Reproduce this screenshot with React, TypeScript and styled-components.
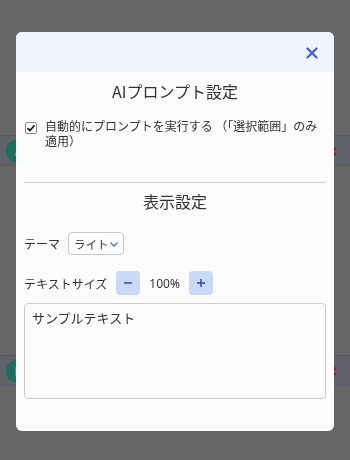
import React, { useState } from "react";
import styled, { createGlobalStyle } from "styled-components";

const GlobalStyle = createGlobalStyle`
  html, body { margin: 0; padding: 0; }
  body {
    background: #cccccc;
    font-family: "Noto Sans CJK JP", "Noto Sans", sans-serif;
    color: #333;
    width: 350px;
    height: 460px;
    overflow: hidden;
  }
  * { box-sizing: border-box; }
`;

const Page = styled.div`
  display: flex;
  flex-direction: column;
  padding-top: 135px;
`;

const Row = styled.div<{ $gap?: number }>`
  height: 31px;
  margin-top: ${(p) => p.$gap ?? 0}px;
  display: flex;
  align-items: center;
  justify-content: space-between;
  padding: 0 12px 0 6px;
  background: #c0c6d4;
  border-top: 1px solid #b0b0b0;
  border-bottom: 1px solid #b8b8b8;
`;

const Avatar = styled.div`
  width: 24px;
  height: 24px;
  border-radius: 50%;
  background: #3cdcc0;
  color: #fff;
  font-size: 11px;
  font-weight: 700;
  display: flex;
  align-items: center;
  justify-content: center;
`;

const RemoveMark = styled.span`
  color: #ff3868;
  font-size: 13px;
  font-weight: 700;
`;

const Overlay = styled.div`
  position: fixed;
  inset: 0;
  background: rgba(0, 0, 0, 0.5);
  display: flex;
  align-items: flex-start;
  justify-content: center;
  padding-top: 32px;
`;

const Modal = styled.div`
  width: 318px;
  background: #fcfcfc;
  border-radius: 6px;
  overflow: hidden;
  display: flex;
  flex-direction: column;
`;

const Header = styled.div`
  height: 40px;
  background: #f0f4fe;
  display: flex;
  align-items: center;
  justify-content: flex-end;
  padding: 0 14px 0 0;
`;

const CloseButton = styled.button`
  border: none;
  background: transparent;
  padding: 0;
  width: 16px;
  height: 16px;
  display: flex;
  align-items: center;
  justify-content: center;
  margin-top: 2px;
  cursor: pointer;
`;

const Body = styled.div`
  display: flex;
  flex-direction: column;
  padding: 7px 8px 32px;
`;

const SectionTitle = styled.h2`
  margin: 0;
  font-size: 16px;
  font-weight: 400;
  line-height: 24px;
  text-align: center;
  color: #333;
`;

const CheckRow = styled.label`
  display: flex;
  align-items: flex-start;
  gap: 8px;
  margin-top: 15px;
  padding-left: 1px;
  font-size: 12px;
  line-height: 15px;
  color: #333;
  cursor: pointer;
`;

const HiddenInput = styled.input`
  position: absolute;
  opacity: 0;
  width: 0;
  height: 0;
`;

const CheckBox = styled.span`
  margin-top: 4px;
  width: 12px;
  height: 12px;
  flex-shrink: 0;
  border: 1px solid #8a8a8a;
  border-radius: 2px;
  background: #fff;
  display: flex;
  align-items: center;
  justify-content: center;
`;

const Divider = styled.hr`
  border: none;
  border-top: 1px solid #cfcfcf;
  margin: 34px 0 6px;
  width: 100%;
`;

const FieldRow = styled.div<{ $mt: number }>`
  display: flex;
  align-items: center;
  gap: 9px;
  margin-top: ${(p) => p.$mt}px;
  font-size: 12px;
  color: #333;
`;

const ThemeRow = styled(FieldRow)`
  gap: 8px;
`;

const SelectBox = styled.div`
  width: 56px;
  height: 23px;
  border: 1px solid #c8c8c8;
  border-radius: 4px;
  background: #fff;
  display: flex;
  align-items: center;
  justify-content: space-between;
  padding: 0 4px 0 5px;
  font-size: 11.5px;
`;

const StepButton = styled.button`
  width: 24px;
  height: 24px;
  border: none;
  border-radius: 4px;
  background: #c9daf6;
  color: #2b4fa8;
  display: flex;
  align-items: center;
  justify-content: center;
  padding: 0;
  cursor: pointer;
`;

const Percent = styled.span`
  font-family: "Noto Sans", sans-serif;
  font-size: 12px;
  color: #333;
`;

const Preview = styled.div<{ $size: number }>`
  margin-top: 8px;
  height: 96px;
  border: 1px solid #cccccc;
  border-radius: 4px;
  padding: 5px 7px;
  font-size: ${(p) => p.$size}px;
  color: #333;
  line-height: 18px;
`;

export default function App() {
  const [checked, setChecked] = useState(true);
  const [size, setSize] = useState(100);
  return (
    <>
      <GlobalStyle />
      <Page>
        <Row>
          <Avatar>A</Avatar>
          <RemoveMark>✕</RemoveMark>
        </Row>
        <Row $gap={189}>
          <Avatar>D</Avatar>
          <RemoveMark>✕</RemoveMark>
        </Row>
      </Page>
      <Overlay>
        <Modal>
          <Header>
            <CloseButton aria-label="close">
              <svg width="12" height="12" viewBox="0 0 12 12">
                <path d="M1.5 1.5 L10.5 10.5 M10.5 1.5 L1.5 10.5" stroke="#3f5fd6" strokeWidth="2.2" strokeLinecap="round" />
              </svg>
            </CloseButton>
          </Header>
          <Body>
            <SectionTitle>AIプロンプト設定</SectionTitle>
            <CheckRow>
              <HiddenInput type="checkbox" checked={checked} onChange={() => setChecked(!checked)} />
              <CheckBox>
                {checked && (
                  <svg width="10" height="10" viewBox="0 0 10 10">
                    <path d="M1.5 5.2 L4 7.6 L8.6 2.2" fill="none" stroke="#111" strokeWidth="1.7" />
                  </svg>
                )}
              </CheckBox>
              <span>自動的にプロンプトを実行する （「選択範囲」のみ適用）</span>
            </CheckRow>
            <Divider />
            <SectionTitle>表示設定</SectionTitle>
            <ThemeRow $mt={19}>
              <span>テーマ</span>
              <SelectBox>
                <span>ライト</span>
                <svg width="10" height="10" viewBox="0 0 10 10">
                  <path d="M1.5 3.5 L5 7 L8.5 3.5" fill="none" stroke="#3b6fd8" strokeWidth="1.3" />
                </svg>
              </SelectBox>
            </ThemeRow>
            <FieldRow $mt={16}>
              <span>テキストサイズ</span>
              <StepButton onClick={() => setSize(size - 10)} aria-label="decrease">
                <svg width="10" height="10" viewBox="0 0 10 10">
                  <path d="M1 5 H9" stroke="#2b4fa8" strokeWidth="1.5" />
                </svg>
              </StepButton>
              <Percent>{size}%</Percent>
              <StepButton onClick={() => setSize(size + 10)} aria-label="increase">
                <svg width="10" height="10" viewBox="0 0 10 10">
                  <path d="M1 5 H9 M5 1 V9" stroke="#2b4fa8" strokeWidth="1.5" />
                </svg>
              </StepButton>
            </FieldRow>
            <Preview $size={(13 * size) / 100}>サンプルテキスト</Preview>
          </Body>
        </Modal>
      </Overlay>
    </>
  );
}
